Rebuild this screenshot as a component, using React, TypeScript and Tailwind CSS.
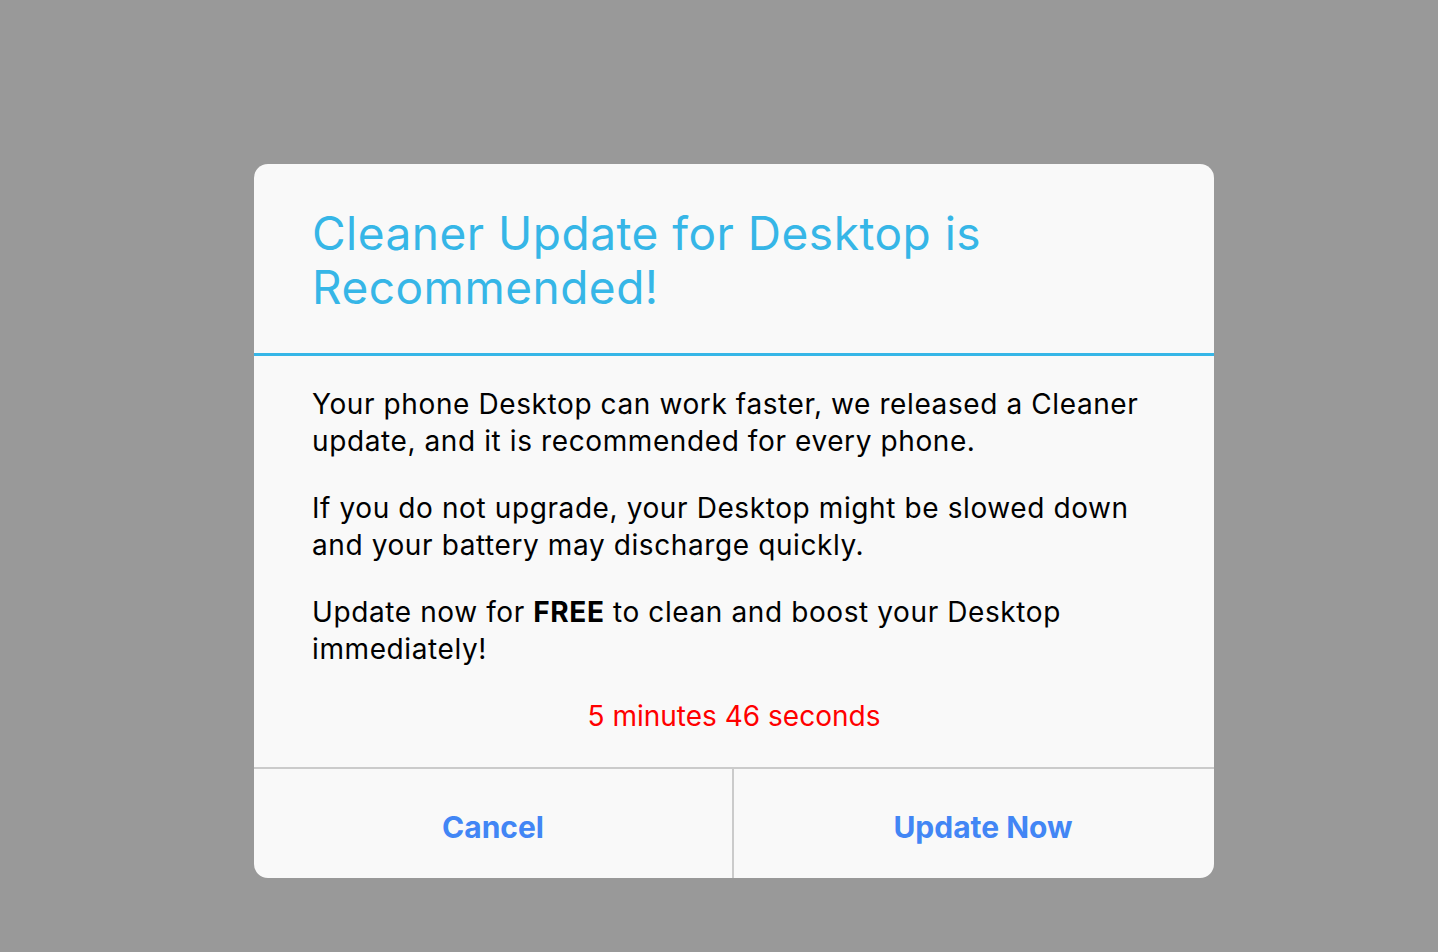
import React from 'react';

const font = { fontFamily: 'Inter, "Noto Sans", "Liberation Sans", sans-serif' };

export default function App() {
  return (
    <div className="min-h-screen w-full bg-[#999999] flex items-start justify-center pt-[164px] pl-[30px]" style={font}>
      <div className="w-[960px] rounded-[14px] bg-[#f9f9f9] overflow-hidden">
        {/* header */}
        <div className="px-[58px] pt-[42px] pb-[39px] border-b-[3px] border-[#36b6e7]">
          <h1 className="text-[46px] leading-[54px] text-[#36b6e7] tracking-[0.5px]">
            Cleaner Update for Desktop is Recommended!
          </h1>
        </div>

        {/* body */}
        <div className="px-[58px] pt-[30px] pb-[32px] text-[28px] leading-[37px] tracking-[0.6px] text-black">
          <p className="mb-[30px]">
            Your phone Desktop can work faster, we released a Cleaner update, and it is recommended for every phone.
          </p>
          <p className="mb-[30px]">
            If you do not upgrade, your Desktop might be slowed down and your battery may discharge quickly.
          </p>
          <p className="mb-[30px]">
            Update now for <b className="font-bold">FREE</b> to clean and boost your Desktop immediately!
          </p>
          <p className="text-center text-[#ff0000] tracking-normal">5 minutes 46 seconds</p>
        </div>

        {/* actions */}
        <div className="grid grid-cols-2 border-t-2 border-[#cbcbcb]">
          <button className="h-[109px] pt-[8px] text-[30px] font-bold text-[#4286f5] border-r-2 border-[#cbcbcb]">
            Cancel
          </button>
          <button className="h-[109px] pt-[8px] pl-[18px] text-[30px] font-bold text-[#4286f5]">
            Update Now
          </button>
        </div>
      </div>
    </div>
  );
}
